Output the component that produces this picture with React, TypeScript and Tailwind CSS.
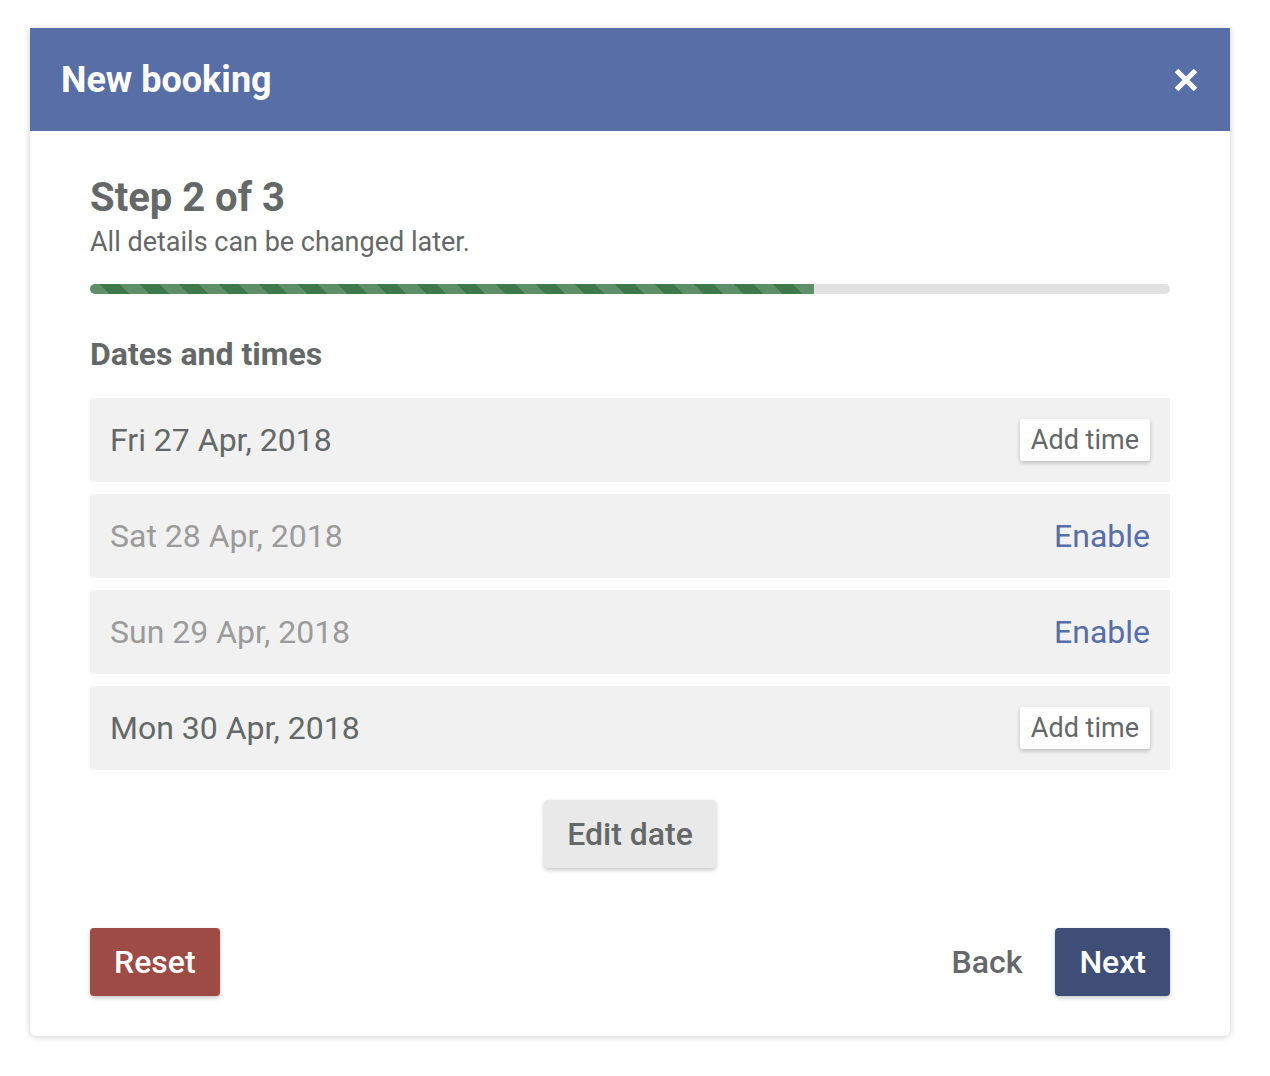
import React from 'react';

interface BookingDay {
  id: number;
  label: string;
  enabled: boolean;
}

const days: BookingDay[] = [
  { id: 1, label: 'Fri 27 Apr, 2018', enabled: true },
  { id: 2, label: 'Sat 28 Apr, 2018', enabled: false },
  { id: 3, label: 'Sun 29 Apr, 2018', enabled: false },
  { id: 4, label: 'Mon 30 Apr, 2018', enabled: true },
];

function CloseIcon() {
  return (
    <svg width="24" height="24" viewBox="0 0 24 24" aria-hidden="true">
      <path d="M2.5 2.5 L21.5 21.5 M21.5 2.5 L2.5 21.5" stroke="#ffffff" strokeWidth="5" strokeLinecap="butt" />
    </svg>
  );
}

function DayRow({ day }: { day: BookingDay }) {
  return (
    <div className="flex h-[84px] items-center justify-between rounded-[4px] bg-[#f1f1f1] px-[20px]">
      <span className={`text-[32px] ${day.enabled ? 'text-[#646868]' : 'text-[#9b9b9b]'}`}>{day.label}</span>
      {day.enabled ? (
        <button className="h-[42px] rounded-[3px] bg-white px-[11px] text-[27px] leading-none text-[#646868] shadow-[0_2px_4px_rgba(0,0,0,0.22)]">
          Add time
        </button>
      ) : (
        <button className="text-[32px] leading-none text-[#586ea6]">Enable</button>
      )}
    </div>
  );
}

export default function App() {
  return (
    <div className="min-h-screen bg-white pt-[28px] font-['Roboto',_'Liberation_Sans',_sans-serif]">
      <div className="mx-[30px] w-[1200px] rounded-b-[6px] bg-white shadow-[0_1px_6px_rgba(0,0,0,0.2)]">
        {/* Header */}
        <div className="flex h-[103px] items-center justify-between bg-[#586ea6] pl-[31px] pr-[32px]">
          <h1 className="text-[36px] font-bold text-white">New booking</h1>
          <button aria-label="Close">
            <CloseIcon />
          </button>
        </div>

        <div className="px-[60px] pt-[43px] pb-[40px]">
          <h2 className="text-[40px] leading-[48px] font-bold text-[#646868]">Step 2 of 3</h2>
          <p className="mt-[5px] text-[27px] leading-[31px] text-[#646868]">All details can be changed later.</p>

          {/* Progress */}
          <div className="mt-[26px] h-[10px] w-full overflow-hidden rounded-full bg-[#e2e2e2]">
            <div className="h-full w-[67%] bg-[repeating-linear-gradient(45deg,#5f8f69_0_14px,#3e7a49_14px_28px)]" />
          </div>

          <h3 className="mt-[42px] text-[32px] leading-[37px] font-bold text-[#646868]">Dates and times</h3>

          <div className="mt-[25px] flex flex-col gap-[12px]">
            {days.map((d) => (
              <DayRow key={d.id} day={d} />
            ))}
          </div>

          <div className="mt-[30px] flex justify-center">
            <button className="h-[68px] rounded-[4px] bg-[#e9e9e9] px-[23px] text-[32px] font-medium text-[#646868] shadow-[0_2px_4px_rgba(0,0,0,0.22)]">
              Edit date
            </button>
          </div>

          {/* Footer actions */}
          <div className="mt-[60px] flex items-center justify-between">
            <button className="h-[68px] rounded-[4px] bg-[#9e4a45] px-[24px] text-[32px] font-medium text-white shadow-[0_2px_4px_rgba(0,0,0,0.22)]">
              Reset
            </button>
            <div className="flex items-center gap-[33px]">
              <button className="text-[32px] font-medium text-[#646868]">Back</button>
              <button className="h-[68px] rounded-[4px] bg-[#3e4e77] px-[24px] text-[32px] font-medium text-white shadow-[0_2px_4px_rgba(0,0,0,0.22)]">
                Next
              </button>
            </div>
          </div>
        </div>
      </div>
    </div>
  );
}
